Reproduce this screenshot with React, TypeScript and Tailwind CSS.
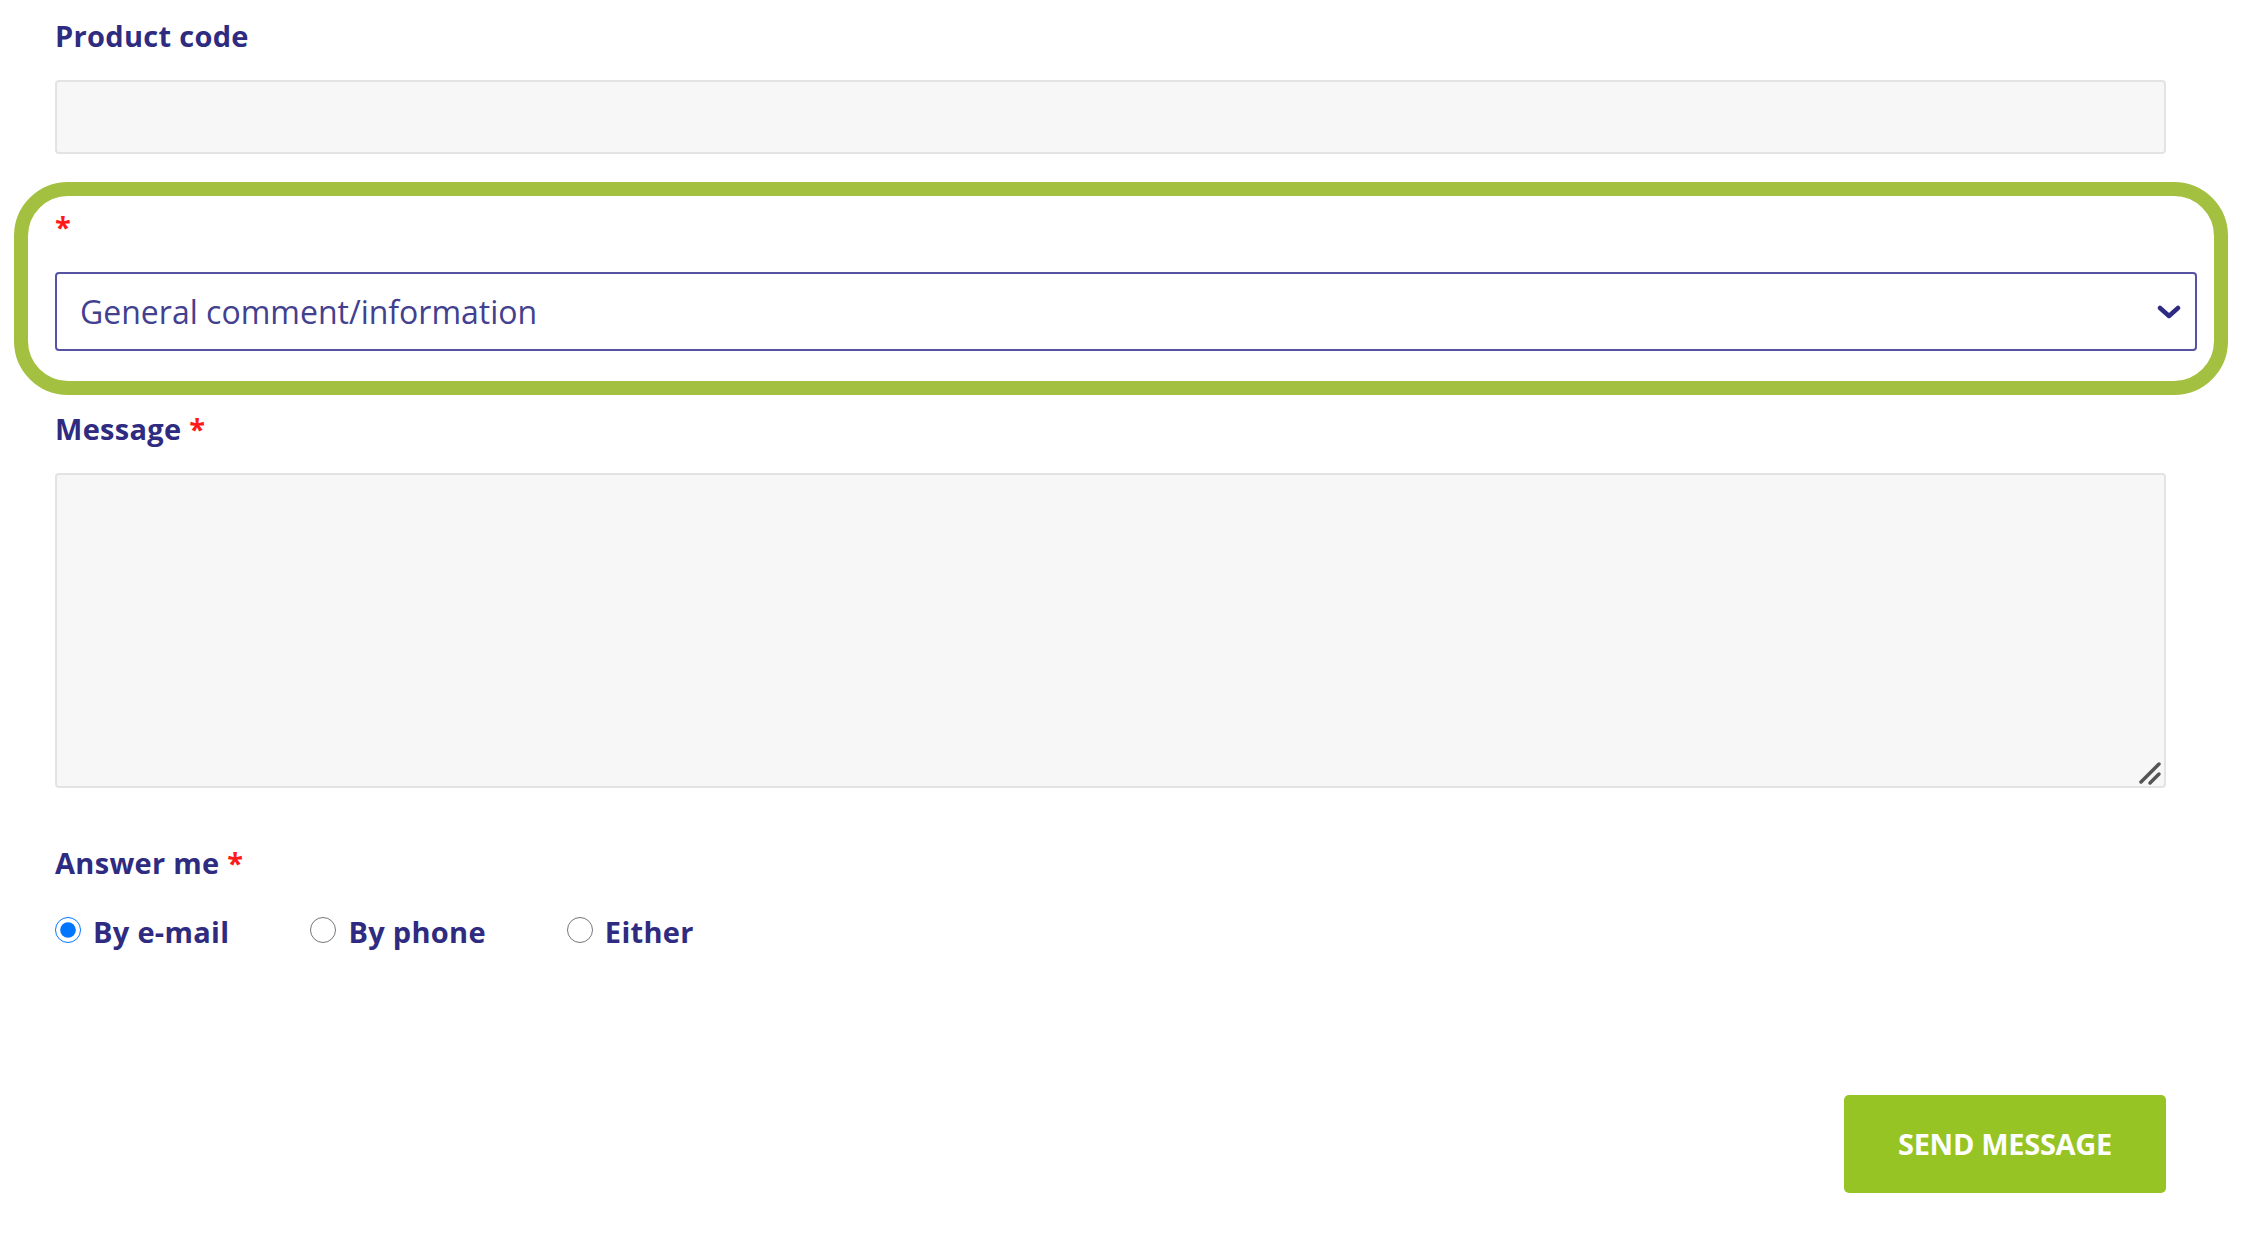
import { useState } from 'react';

const labelCls = 'block text-[29px] leading-[40px] font-bold tracking-[0.3px] text-[#2e2b80]';
const fieldCls = 'block w-full bg-[#f7f7f7] border-2 border-[#e3e3e3] rounded-[4px] outline-none';

const options = [
    { value: 'email', label: 'By e-mail' },
    { value: 'phone', label: 'By phone' },
    { value: 'either', label: 'Either' },
];

function Star() {
    return <span className="text-[#ff1a1a]">*</span>;
}

export default function App() {
    const [answer, setAnswer] = useState('email');

    return (
        <div className="min-h-[1251px] bg-white" style={{ fontFamily: '"Open Sans", "Noto Sans", sans-serif' }}>
            <form className="w-[2166px] pl-[55px] pt-[16px]" onSubmit={(e) => e.preventDefault()}>
                {/* Product code */}
                <label className={labelCls}>Product code</label>
                <input type="text" className={`${fieldCls} mt-[24px] h-[74px] px-[20px] text-[28px]`} />

                {/* Highlighted subject select */}
                <div className="-ml-[41px] mt-[28px] w-[2214px] border-[14px] border-[#a3c040] rounded-[54px] pl-[27px] pr-[17px] pt-[11px] pb-[30px]">
                    <label className={labelCls}>
                        <Star />
                    </label>
                    <div className="relative mt-[25px]">
                        <select
                            defaultValue="general"
                            className="block w-full h-[79px] appearance-none bg-white border-2 border-[#5654a2] rounded-[4px] pl-[23px] pr-[60px] text-[32px] text-[#42408f] outline-none"
                        >
                            <option value="general">General comment/information</option>
                            <option value="complaint">Complaint</option>
                            <option value="question">Question about a product</option>
                        </select>
                        <svg
                            className="pointer-events-none absolute right-[16px] top-[33px] w-[24px] h-[14px]"
                            viewBox="0 0 24 14"
                            fill="none"
                            stroke="#2e2b80"
                            strokeWidth={4.5}
                            strokeLinecap="round"
                            strokeLinejoin="round"
                        >
                            <path d="M3 3l9 8 9-8" />
                        </svg>
                    </div>
                </div>

                {/* Message */}
                <label className={`${labelCls} mt-[14px]`}>
                    Message <Star />
                </label>
                <div className="relative mt-[24px]">
                    <textarea className={`${fieldCls} h-[315px] resize-none p-[20px] text-[28px]`} />
                    <svg
                        className="pointer-events-none absolute right-[3px] bottom-[2px] w-[26px] h-[26px]"
                        viewBox="0 0 26 26"
                        fill="none"
                        stroke="#555"
                        strokeWidth={3.5}
                        strokeLinecap="round"
                    >
                        <path d="M4 22L22 4" />
                        <path d="M13 23L22 14" />
                    </svg>
                </div>

                {/* Answer me */}
                <label className={`${labelCls} mt-[55px]`}>
                    Answer me <Star />
                </label>
                <div className="mt-[29px] flex items-center gap-[81px]">
                    {options.map((opt) => (
                        <label
                            key={opt.value}
                            className="flex items-center gap-[12px] text-[29px] leading-[40px] font-bold tracking-[0.3px] text-[#2e2b80]"
                        >
                            <input
                                type="radio"
                                name="answer"
                                value={opt.value}
                                checked={answer === opt.value}
                                onChange={() => setAnswer(opt.value)}
                                className="m-0 w-[26px] h-[26px] -mt-[5px]"
                            />
                            {opt.label}
                        </label>
                    ))}
                </div>

                {/* Submit */}
                <div className="mt-[143px] flex justify-end">
                    <button
                        type="submit"
                        className="w-[322px] h-[98px] rounded-[5px] bg-[#96c424] text-white text-[29px] font-bold tracking-[-0.3px]"
                    >
                        SEND MESSAGE
                    </button>
                </div>
            </form>
        </div>
    );
}
